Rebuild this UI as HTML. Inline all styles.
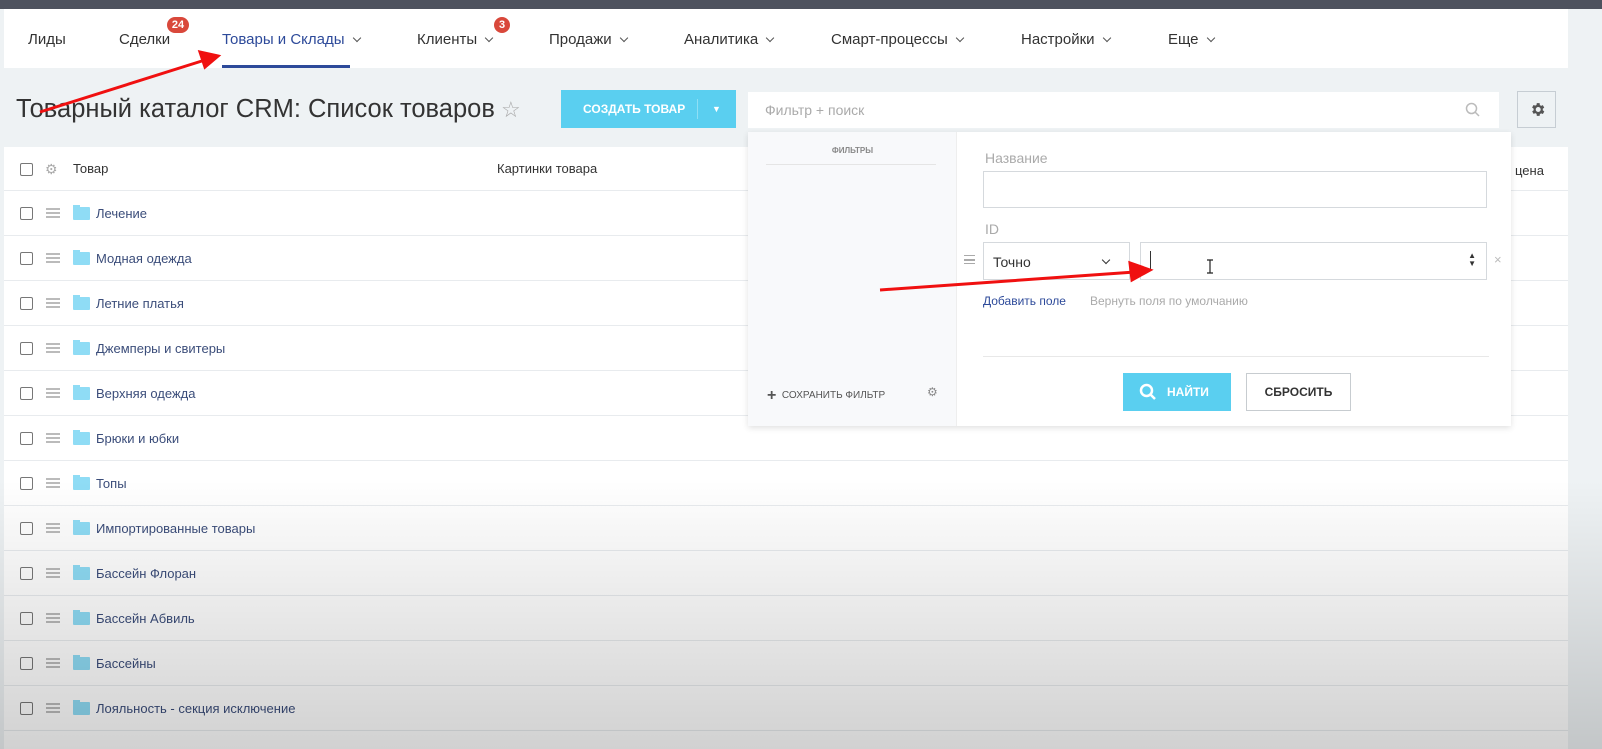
<!DOCTYPE html>
<html><head><meta charset="utf-8"><style>
*{box-sizing:border-box;margin:0;padding:0}
body{width:1602px;height:749px;overflow:hidden;background:#eef2f4;font-family:"Liberation Sans",sans-serif;position:relative}
.top{position:absolute;left:0;top:0;width:1602px;height:9px;background:#4e525e}
.nav{position:absolute;left:4px;top:9px;width:1564px;height:59px;background:#fff}
.nav span{position:absolute;top:22px;font-size:15px;color:#333}
.chev{display:inline-block;width:6px;height:6px;border-right:1.5px solid #555;border-bottom:1.5px solid #555;transform:rotate(45deg);margin-left:9px;position:relative;top:-3px}
.badge{position:absolute;background:#d9483b;color:#fff;font-size:11px;font-weight:bold;border-radius:9px;height:16px;line-height:16px;text-align:center}
h1{position:absolute;left:16px;top:95px;font-size:25.5px;font-weight:normal;color:#333}
.btn{position:absolute;left:561px;top:90px;width:175px;height:38px;background:#5acff0;color:#fff;font-size:12px;font-weight:bold;line-height:38px}
.search{position:absolute;left:748px;top:92px;width:751px;height:36px;background:#fff;color:#aaa;font-size:14px;line-height:36px;padding-left:17px}
.gear{position:absolute;left:1517px;top:91px;width:39px;height:37px;border:1px solid #c6cdd3;background:#eef2f4}
.table{position:absolute;left:4px;top:147px;width:1564px;height:602px;background:#fff}
.row{position:absolute;left:0;width:1564px;height:45px;border-bottom:1px solid #e8ebee}
.cb{position:absolute;left:16px;width:13px;height:13px;border:1.5px solid #777;border-radius:2px}
.ham{position:absolute;left:42px;width:14px;height:10px;border-top:2px solid #bbb;border-bottom:2px solid #bbb}
.ham:after{content:"";position:absolute;left:0;top:2px;width:14px;height:2px;background:#bbb}
.fold{position:absolute;left:69px;width:17px;height:13px;background:#8fdcf5;border-radius:1px}
.fold:before{content:"";position:absolute;left:0;top:-2px;width:7px;height:3px;background:#8fdcf5}
.row .t{position:absolute;left:92px;font-size:13px;color:#3b4d7a}
.popup{position:absolute;left:748px;top:132px;width:763px;height:294px;background:#fff;box-shadow:0 2px 6px rgba(0,0,0,.12)}
.side{position:absolute;left:0;top:0;width:209px;height:294px;background:#f8f9fb;border-right:1px solid #eee}
.inp{position:absolute;border:1px solid #d5d9dd;background:#fff}
.shade{position:absolute;left:0;top:0;width:1602px;height:749px;pointer-events:none;background:linear-gradient(to bottom,rgba(0,0,0,0) 0,rgba(0,0,0,0) 480px,rgba(0,0,0,.18) 749px)}
</style></head><body>
<div class="top"></div>
<div class="nav">
<span style="left:24px">Лиды</span>
<span style="left:115px">Сделки</span><div class="badge" style="left:163px;top:8px;width:22px">24</div>
<span style="left:218px;color:#2d4a9a">Товары и Склады<i class="chev"></i></span>
<div style="position:absolute;left:218px;top:56px;width:128px;height:3px;background:#2d4a9a"></div>
<span style="left:413px">Клиенты<i class="chev"></i></span><div class="badge" style="left:490px;top:8px;width:16px">3</div>
<span style="left:545px">Продажи<i class="chev"></i></span>
<span style="left:680px">Аналитика<i class="chev"></i></span>
<span style="left:827px">Смарт-процессы<i class="chev"></i></span>
<span style="left:1017px">Настройки<i class="chev"></i></span>
<span style="left:1164px">Еще<i class="chev"></i></span>
</div>
<h1>Товарный каталог CRM: Список товаров<span style="color:#aaa;font-size:22px"> ☆</span></h1>
<div class="btn"><span style="position:absolute;left:22px">СОЗДАТЬ ТОВАР</span><div style="position:absolute;left:136px;top:9px;width:1px;height:20px;background:#8fdff5"></div><span style="position:absolute;left:151px;font-size:9px">▼</span></div>
<div class="search">Фильтр + поиск<svg style="position:absolute;right:18px;top:10px" width="16" height="16"><circle cx="6.5" cy="6.5" r="5" fill="none" stroke="#bbb" stroke-width="1.5"/><path d="M10 10l4 4" stroke="#bbb" stroke-width="1.5"/></svg></div>
<div class="gear"><svg style="position:absolute;left:11px;top:9px" width="17" height="17" viewBox="0 0 24 24"><path fill="#555" d="M19.4 13a7.5 7.5 0 000-2l2.1-1.6-2-3.5-2.5 1a7 7 0 00-1.7-1L15 3h-4l-.4 2.6a7 7 0 00-1.7 1l-2.5-1-2 3.5L6.6 11a7.5 7.5 0 000 2l-2.1 1.6 2 3.5 2.5-1a7 7 0 001.7 1L11 21h4l.4-2.6a7 7 0 001.7-1l2.5 1 2-3.5zM13 15.5a3.5 3.5 0 110-7 3.5 3.5 0 010 7z"/></svg></div>
<div class="table">
<div class="row" style="top:0;height:44px"><div class="cb" style="top:16px"></div><span style="position:absolute;left:41px;top:14px;color:#aaa;font-size:14px">⚙</span><span style="position:absolute;left:69px;top:14px;font-size:13px;color:#333">Товар</span><span style="position:absolute;left:493px;top:14px;font-size:13px;color:#333">Картинки товара</span><span style="position:absolute;left:1511px;top:16px;font-size:13px;color:#333">цена</span></div>
</div>
<div id="rows"></div>
<div class="popup">
<div class="side"><div style="position:absolute;left:0;width:209px;top:14px;text-align:center;font-size:8px;font-weight:bold;color:#888">ФИЛЬТРЫ</div><div style="position:absolute;left:18px;top:32px;width:170px;height:1px;background:#e5e5e5"></div>
<div style="position:absolute;left:19px;top:253px;font-size:10px;color:#555"><b style="font-size:16px;position:relative;top:2px">+</b>&nbsp; СОХРАНИТЬ ФИЛЬТР</div><span style="position:absolute;left:179px;top:253px;color:#888;font-size:12px">⚙</span></div>
<div style="position:absolute;left:237px;top:18px;font-size:14px;color:#aaa">Название</div>
<div class="inp" style="left:235px;top:39px;width:504px;height:37px"></div>
<div style="position:absolute;left:237px;top:89px;font-size:14px;color:#aaa">ID</div>
<div style="position:absolute;left:216px;top:123px;width:11px;height:9px;border-top:1.5px solid #aaa;border-bottom:1.5px solid #aaa"></div><div style="position:absolute;left:216px;top:127px;width:11px;height:1.5px;background:#aaa"></div>
<div class="inp" style="left:235px;top:110px;width:147px;height:38px"><span style="position:absolute;left:9px;top:11px;font-size:14px;color:#333">Точно</span><i class="chev" style="position:absolute;left:119px;top:14px;margin:0;border-color:#333"></i></div>
<div class="inp" style="left:392px;top:110px;width:347px;height:38px"><div style="position:absolute;left:9px;top:8px;width:1px;height:18px;background:#333"></div><span style="position:absolute;right:10px;top:9px;font-size:8px;line-height:8px;color:#333">▲<br>▼</span></div>
<span style="position:absolute;left:746px;top:120px;color:#bbb;font-size:13px">×</span>
<div style="position:absolute;left:235px;top:162px;font-size:12px;color:#2d4a9a">Добавить поле</div>
<div style="position:absolute;left:342px;top:162px;font-size:12px;color:#aaa">Вернуть поля по умолчанию</div>
<div style="position:absolute;left:235px;top:224px;width:506px;height:1px;background:#e8e8e8"></div>
<div style="position:absolute;left:375px;top:241px;width:108px;height:38px;background:#5acff0;color:#fff;font-size:12px;font-weight:bold;line-height:38px;padding-left:44px">НАЙТИ<svg style="position:absolute;left:16px;top:10px" width="18" height="18"><circle cx="7.5" cy="7.5" r="5.5" fill="none" stroke="#fff" stroke-width="2.5"/><path d="M11 11l5 5" stroke="#fff" stroke-width="2.5"/></svg></div>
<div style="position:absolute;left:498px;top:241px;width:105px;height:38px;border:1px solid #c7ccd0;color:#333;font-size:12px;font-weight:bold;line-height:36px;text-align:center">СБРОСИТЬ</div>
</div>
<svg style="position:absolute;left:0;top:0" width="1602" height="749"><g stroke="#f01010" stroke-width="3" fill="#f01010"><line x1="40" y1="112" x2="205" y2="60"/><polygon points="218,56 200,52 205,67"/><line x1="880" y1="290" x2="1135" y2="272"/><polygon points="1150,270 1130,263 1132,280"/></g><path d="M1207 260h6M1210 260v13M1207 273h6" stroke="#222" stroke-width="1.2"/></svg>
<div class="shade"></div>
<script>
var n=["Лечение","Модная одежда","Летние платья","Джемперы и свитеры","Верхняя одежда","Брюки и юбки","Топы","Импортированные товары","Бассейн Флоран","Бассейн Абвиль","Бассейны","Лояльность - секция исключение"],h="";
n.forEach(function(t,i){var y=191+i*45;h+='<div class="row" style="left:4px;top:'+y+'px"><div class="cb" style="top:16px"></div><div class="ham" style="top:17px"></div><div class="fold" style="top:16px"></div><span class="t" style="top:15px">'+t+'</span></div>';});
document.getElementById("rows").outerHTML=h;
</script>
</body></html>
